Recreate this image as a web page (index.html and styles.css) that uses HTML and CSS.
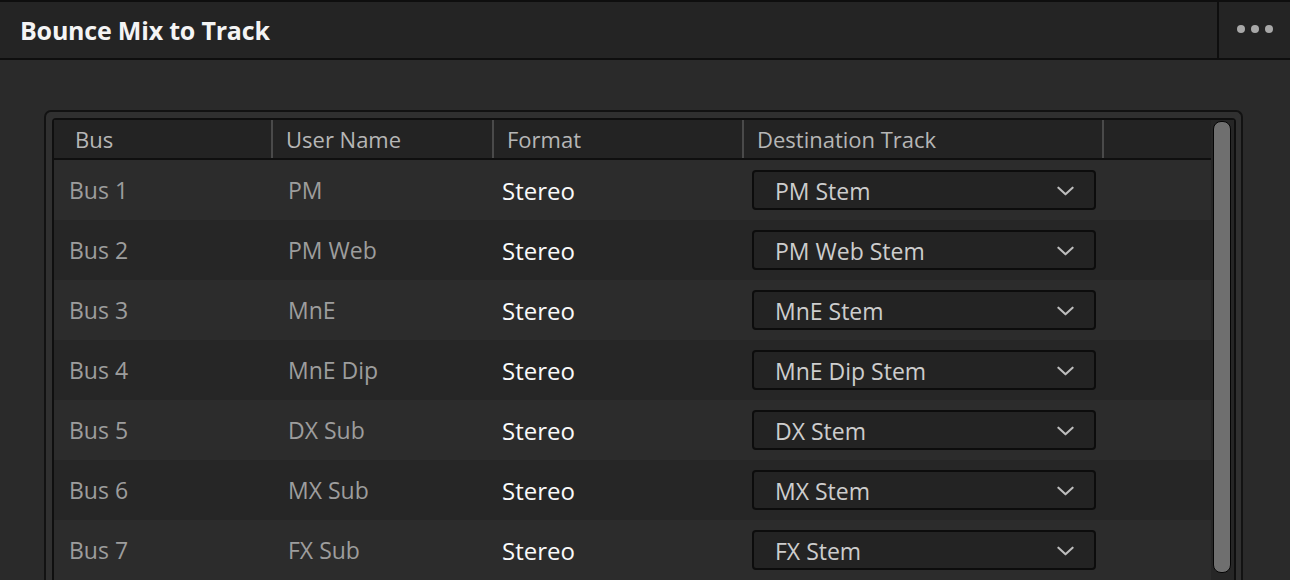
FILE: index.html
```html
<!DOCTYPE html>
<html>
<head>
  <meta charset="utf-8">
  <title>Bounce Mix to Track</title>
  <link rel="stylesheet" href="styles.css">
</head>
<body>
  <div class="panel">
    <div class="titlebar">
      <h1 class="title">Bounce Mix to Track</h1>
      <div class="menu">
        <span class="dot"></span><span class="dot"></span><span class="dot"></span>
      </div>
    </div>

    <div class="content">
      <div class="frame">
        <div class="inner">
          <div class="table">
            <div class="row head">
              <div class="cell c-bus">Bus</div>
              <div class="cell c-name">User Name</div>
              <div class="cell c-format">Format</div>
              <div class="cell c-dest">Destination Track</div>
              <div class="cell c-rest"></div>
            </div>

            <div class="row">
              <div class="cell c-bus">Bus 1</div>
              <div class="cell c-name">PM</div>
              <div class="cell c-format">Stereo</div>
              <div class="cell c-dest"><div class="select"><span>PM Stem</span><svg class="chev" viewBox="0 0 18 10"><path d="M1.5 1.5 L9 8.5 L16.5 1.5"/></svg></div></div>
            </div>
            <div class="row">
              <div class="cell c-bus">Bus 2</div>
              <div class="cell c-name">PM Web</div>
              <div class="cell c-format">Stereo</div>
              <div class="cell c-dest"><div class="select"><span>PM Web Stem</span><svg class="chev" viewBox="0 0 18 10"><path d="M1.5 1.5 L9 8.5 L16.5 1.5"/></svg></div></div>
            </div>
            <div class="row">
              <div class="cell c-bus">Bus 3</div>
              <div class="cell c-name">MnE</div>
              <div class="cell c-format">Stereo</div>
              <div class="cell c-dest"><div class="select"><span>MnE Stem</span><svg class="chev" viewBox="0 0 18 10"><path d="M1.5 1.5 L9 8.5 L16.5 1.5"/></svg></div></div>
            </div>
            <div class="row">
              <div class="cell c-bus">Bus 4</div>
              <div class="cell c-name">MnE Dip</div>
              <div class="cell c-format">Stereo</div>
              <div class="cell c-dest"><div class="select"><span>MnE Dip Stem</span><svg class="chev" viewBox="0 0 18 10"><path d="M1.5 1.5 L9 8.5 L16.5 1.5"/></svg></div></div>
            </div>
            <div class="row">
              <div class="cell c-bus">Bus 5</div>
              <div class="cell c-name">DX Sub</div>
              <div class="cell c-format">Stereo</div>
              <div class="cell c-dest"><div class="select"><span>DX Stem</span><svg class="chev" viewBox="0 0 18 10"><path d="M1.5 1.5 L9 8.5 L16.5 1.5"/></svg></div></div>
            </div>
            <div class="row">
              <div class="cell c-bus">Bus 6</div>
              <div class="cell c-name">MX Sub</div>
              <div class="cell c-format">Stereo</div>
              <div class="cell c-dest"><div class="select"><span>MX Stem</span><svg class="chev" viewBox="0 0 18 10"><path d="M1.5 1.5 L9 8.5 L16.5 1.5"/></svg></div></div>
            </div>
            <div class="row">
              <div class="cell c-bus">Bus 7</div>
              <div class="cell c-name">FX Sub</div>
              <div class="cell c-format">Stereo</div>
              <div class="cell c-dest"><div class="select"><span>FX Stem</span><svg class="chev" viewBox="0 0 18 10"><path d="M1.5 1.5 L9 8.5 L16.5 1.5"/></svg></div></div>
            </div>
          </div>

          <div class="scroll">
            <div class="thumb"></div>
          </div>
        </div>
      </div>
    </div>
  </div>
</body>
</html>
```

FILE: styles.css
```css
html, body {
  margin: 0;
  padding: 0;
  height: 100%;
  overflow: hidden;
}

body {
  font-family: 'Open Sans', 'Noto Sans', sans-serif;
  background: #2a2a2a;
}

.panel {
  height: 580px;
  overflow: hidden;
}

.titlebar {
  display: flex;
  height: 56px;
  background: #242424;
  border-top: 2px solid #0e0e0e;
  border-bottom: 2px solid #0e0e0e;
}

.title {
  flex: 1;
  margin: 0;
  padding-left: 20px;
  color: #f4f4f4;
  font-size: 25px;
  font-weight: 700;
  line-height: 56px;
  letter-spacing: -0.2px;
}

.menu {
  width: 71px;
  border-left: 2px solid #0e0e0e;
  display: flex;
  align-items: center;
  justify-content: center;
  gap: 6px;
  padding-bottom: 2px;
}

.dot {
  width: 8px;
  height: 8px;
  border-radius: 50%;
  background: #a8a8a8;
}

.content {
  padding: 50px 47px 0 44px;
}

.frame {
  border: 2px solid #121212;
  border-bottom: none;
  border-radius: 7px 7px 0 0;
  background: #303030;
  padding: 6px 5px 0 6px;
}

.inner {
  display: flex;
  border: 2px solid #0f0f0f;
  border-bottom: none;
  border-radius: 4px 4px 0 0;
  background: #282828;
  height: 460px;
}

.table {
  flex: 1;
}

.row {
  display: flex;
  align-items: center;
  height: 60px;
  background: #2c2c2c;
  color: #9d9d9d;
  font-size: 23px;
}

.row:nth-child(odd) {
  background: #262626;
}

.row.head {
  height: 38px;
  background: #232323;
  border-bottom: 2px solid #0f0f0f;
  color: #b6b6b6;
  font-size: 22px;
  align-items: stretch;
}

.cell {
  box-sizing: border-box;
  white-space: nowrap;
}

.head .cell {
  display: flex;
  align-items: center;
  border-right: 2px solid #4a4a4a;
}

.head .cell.c-rest {
  border-right: none;
  flex: 1;
}

.c-bus {
  width: 219px;
  padding-left: 15px;
}

.c-name {
  width: 221px;
  padding-left: 15px;
}

.c-format {
  width: 250px;
  padding-left: 8px;
  color: #fafafa;
  font-size: 24px;
}

.c-dest {
  width: 360px;
  padding-left: 8px;
}

.head .c-bus {
  padding-left: 21px;
}

.head .c-name,
.head .c-format,
.head .c-dest {
  padding-left: 13px;
  color: #b6b6b6;
  font-size: 22px;
}

.select {
  display: flex;
  align-items: center;
  justify-content: space-between;
  width: 344px;
  height: 40px;
  box-sizing: border-box;
  border: 2px solid #0c0c0c;
  border-radius: 4px;
  background: #232323;
  padding: 2px 20px 0 21px;
  color: #cdcdcd;
}

.chev {
  width: 17px;
  height: 10px;
  fill: none;
  stroke: #bdbdbd;
  stroke-width: 2.2;
  stroke-linecap: round;
  stroke-linejoin: round;
}

.scroll {
  width: 23px;
  background: #262626;
  padding-top: 1px;
}

.thumb {
  width: 16px;
  height: 450px;
  margin-left: 2px;
  border: 1px solid #050505;
  border-radius: 8px;
  background: #6f6f6f;
}
```
